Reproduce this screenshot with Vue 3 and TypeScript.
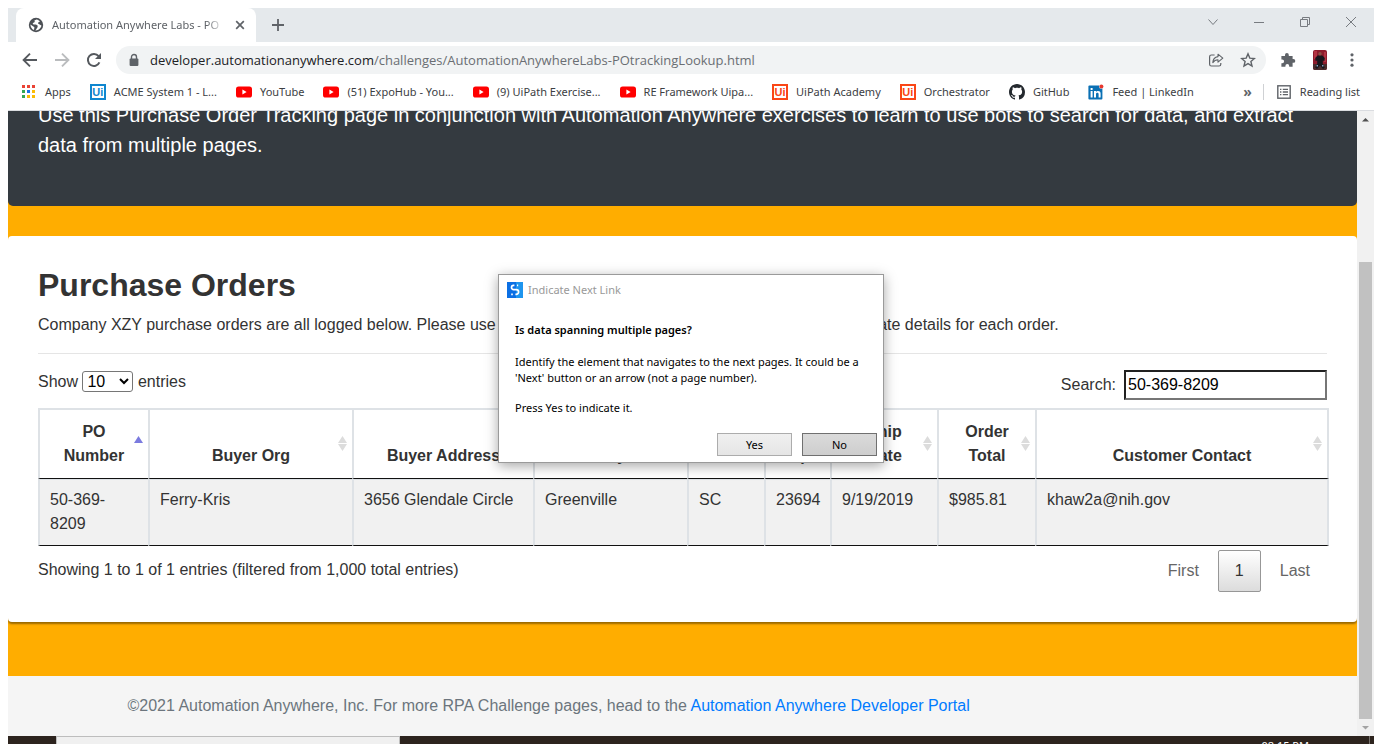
<script setup lang="ts">
import { ref } from 'vue'

type IconKind = 'apps' | 'ui-blue' | 'ui-red' | 'youtube' | 'github' | 'linkedin'

interface Bookmark {
  icon: IconKind
  label: string
}

interface Column {
  key: string
  label: string
}

const bookmarks: Bookmark[] = [
  { icon: 'apps', label: 'Apps' },
  { icon: 'ui-blue', label: 'ACME System 1 - L...' },
  { icon: 'youtube', label: 'YouTube' },
  { icon: 'youtube', label: '(51) ExpoHub - You...' },
  { icon: 'youtube', label: '(9) UiPath Exercise...' },
  { icon: 'youtube', label: 'RE Framework Uipa...' },
  { icon: 'ui-red', label: 'UiPath Academy' },
  { icon: 'ui-red', label: 'Orchestrator' },
  { icon: 'github', label: 'GitHub' },
  { icon: 'linkedin', label: 'Feed | LinkedIn' },
]

const appDots = ['#ea4335', '#ea4335', '#ea4335', '#34a853', '#1a73e8', '#fbbc04', '#34a853', '#fbbc04', '#fbbc04']

const columns: Column[] = [
  { key: 'po', label: 'PO Number' },
  { key: 'org', label: 'Buyer Org' },
  { key: 'address', label: 'Buyer Address' },
  { key: 'city', label: 'City' },
  { key: 'state', label: 'State' },
  { key: 'zip', label: 'Zip' },
  { key: 'ship', label: 'Ship Date' },
  { key: 'total', label: 'Order Total' },
  { key: 'contact', label: 'Customer Contact' },
]

const orders: Record<string, string>[] = [
  {
    po: '50-369-8209',
    org: 'Ferry-Kris',
    address: '3656 Glendale Circle',
    city: 'Greenville',
    state: 'SC',
    zip: '23694',
    ship: '9/19/2019',
    total: '$985.81',
    contact: 'khaw2a@nih.gov',
  },
]

const pageSize = ref('10')
const search = ref('50-369-8209')
</script>

<template>
  <div class="screen">
    <div class="browser">
      <header class="tabstrip">
        <div class="tab">
          <svg class="i16" viewBox="0 0 16 16">
            <circle cx="8" cy="8" r="7.2" fill="#4d5156" />
            <path d="M8.6 2.4 L6.4 3.4 L6.8 5 L4.6 6.2 L5.4 7.4 L8 7.6 L9.8 8.8 L9.4 10.4 L7.4 13.4 C10.6 13.6 13.2 11.2 13.4 8.6 L11.6 7.6 L10 6.6 L10.4 5.2 L12 4.4 C11 3.2 10 2.6 8.6 2.4 Z M2.4 7.4 L5 9.2 L6.4 10.2 L6 13 C3.8 12 2.4 9.8 2.4 7.4 Z" fill="#fff" />
          </svg>
          <span class="tab-title">Automation Anywhere Labs - PO</span>
          <button class="bare" aria-label="Close tab">
            <svg class="i16" viewBox="0 0 16 16"><path d="M4.2 4.2 L11.8 11.8 M11.8 4.2 L4.2 11.8" stroke="#5f6368" stroke-width="1.7" fill="none" /></svg>
          </button>
        </div>
        <button class="bare new-tab" aria-label="New tab">
          <svg class="i16" viewBox="0 0 16 16"><path d="M8 2 V14 M2 8 H14" stroke="#5f6368" stroke-width="1.8" fill="none" /></svg>
        </button>
        <div class="window-controls">
          <button class="bare" aria-label="Search tabs"><svg class="i16" viewBox="0 0 16 16"><path d="M3.5 5.5 L8 10.5 L12.5 5.5" stroke="#777b80" fill="none" /></svg></button>
          <button class="bare" aria-label="Minimize"><svg class="i16" viewBox="0 0 16 16"><path d="M3 8.5 H13" stroke="#777b80" fill="none" /></svg></button>
          <button class="bare" aria-label="Restore"><svg class="i16" viewBox="0 0 16 16"><path d="M3.5 5.5 H10.5 V12.5 H3.5 Z M5.5 5.5 V3.5 H12.5 V10.5 H10.5" stroke="#777b80" fill="none" /></svg></button>
          <button class="bare" aria-label="Close window"><svg class="i16" viewBox="0 0 16 16"><path d="M3 3 L13 13 M13 3 L3 13" stroke="#777b80" fill="none" /></svg></button>
        </div>
      </header>

      <div class="toolbar">
        <button class="bare" aria-label="Back"><svg class="i16" viewBox="0 0 16 16"><path d="M15 8 H2 M8 1.6 L1.6 8 L8 14.4" stroke="#55595e" stroke-width="1.9" fill="none" /></svg></button>
        <button class="bare" aria-label="Forward"><svg class="i16" viewBox="0 0 16 16"><path d="M1 8 H14 M8 1.6 L14.4 8 L8 14.4" stroke="#babcbe" stroke-width="1.9" fill="none" /></svg></button>
        <button class="bare" aria-label="Reload"><svg class="i16" viewBox="0 0 16 16"><path d="M13.4 10.4 A6 6 0 1 1 12.6 4.2" stroke="#55595e" stroke-width="2" fill="none" /><path d="M15 1 V7 H9 Z" fill="#55595e" /></svg></button>
        <div class="omnibox">
          <svg class="lock" viewBox="0 0 10 14"><path d="M2.5 6 V4 A2.5 2.5 0 0 1 7.5 4 V6" stroke="#5f6368" stroke-width="1.4" fill="none" /><rect x="0.6" y="5.4" width="8.8" height="7.6" rx="1" fill="#5f6368" /></svg>
          <span class="url"><b>developer.automationanywhere.com</b>/challenges/AutomationAnywhereLabs-POtrackingLookup.html</span>
          <button class="bare" aria-label="Share"><svg class="i16" viewBox="0 0 16 16"><path d="M6.6 3 H3.4 A1.8 1.8 0 0 0 1.6 4.8 V12.2 A1.8 1.8 0 0 0 3.4 14 H11 A1.8 1.8 0 0 0 12.8 12.2 V11" stroke="#5f6368" stroke-width="1.2" fill="none" /><path d="M10 2.2 L14.8 6.2 L10 10.2 V7.8 C7.6 7.8 6 8.8 4.8 10.6 C5 7.4 6.8 5 10 4.6 Z" stroke="#5f6368" stroke-width="1.1" stroke-linejoin="round" fill="none" /></svg></button>
          <button class="bare" aria-label="Bookmark this tab"><svg class="i16" viewBox="0 0 16 16"><path d="M8 1.8 L9.8 6.1 L14.4 6.5 L10.9 9.5 L12 14 L8 11.6 L4 14 L5.1 9.5 L1.6 6.5 L6.2 6.1 Z" stroke="#5f6368" stroke-width="1.4" fill="none" /></svg></button>
        </div>
        <button class="bare" aria-label="Extensions"><svg class="i16" viewBox="0 0 16 16"><path d="M1.4 4 H5 V3 A1.9 1.9 0 0 1 8.8 3 V4 H12.6 V7 H13.4 A1.9 1.9 0 0 1 13.4 10.8 H12.6 V14.8 H9.2 V14 A1.8 1.8 0 0 0 5.4 14 V14.8 H1.4 V11.2 H2.2 A1.9 1.9 0 0 0 2.2 7.4 H1.4 Z" fill="#5f6368" /></svg></button>
        <svg class="avatar" viewBox="0 0 14 20">
          <rect width="14" height="20" rx="2" fill="#8d1c2c" />
          <path d="M1 1 H4 V9 H1 Z M11 2 H13 V12 H11 Z" fill="#b23443" />
          <path d="M0 14 H14 V18 A2 2 0 0 1 12 20 H2 A2 2 0 0 1 0 18 Z" fill="#4a2c2c" />
          <path d="M4.6 5.6 H9.4 L11.8 8 L11.4 11 L9.8 10.6 V14 L11.8 17.6 L10 19 L7 15.6 L4 19 L2.2 17.6 L4.2 14 V10.6 L2.6 11 L2.2 8 Z" fill="#17161c" />
          <circle cx="7" cy="3.8" r="1.7" fill="#8a5348" />
          <path d="M3.6 15 H5 V16.6 H3.6 Z M9 15 H10.4 V16.6 H9 Z" fill="#8aa4c6" />
        </svg>
        <button class="bare" aria-label="Menu"><svg class="i16" viewBox="0 0 16 16"><circle cx="8" cy="2.8" r="1.6" fill="#5f6368" /><circle cx="8" cy="8" r="1.6" fill="#5f6368" /><circle cx="8" cy="13.2" r="1.6" fill="#5f6368" /></svg></button>
      </div>

      <nav class="bookmarks">
        <a v-for="(item, i) in bookmarks" :key="i" href="#" class="bookmark">
          <svg v-if="item.icon === 'apps'" class="i16" viewBox="0 0 16 16">
            <rect v-for="(dot, d) in appDots" :key="d" :x="(d % 3) * 5 + 1" :y="Math.floor(d / 3) * 5 + 1" width="3" height="3" :fill="dot" />
          </svg>
          <span v-else-if="item.icon === 'ui-blue'" class="ui-logo blue">Ui</span>
          <span v-else-if="item.icon === 'ui-red'" class="ui-logo red">Ui</span>
          <svg v-else-if="item.icon === 'youtube'" class="i16" viewBox="0 0 16 16">
            <rect y="2.4" width="16" height="11.2" rx="2.6" fill="#f00" /><path d="M6.4 5.6 L10.6 8 L6.4 10.4 Z" fill="#fff" />
          </svg>
          <svg v-else-if="item.icon === 'github'" class="i16" viewBox="0 0 16 16">
            <path fill="#24292e" d="M8 0C3.58 0 0 3.58 0 8c0 3.54 2.29 6.53 5.47 7.59.4.07.55-.17.55-.38 0-.19-.01-.82-.01-1.49-2.01.37-2.53-.49-2.69-.94-.09-.23-.48-.94-.82-1.13-.28-.15-.68-.52-.01-.53.63-.01 1.08.58 1.23.82.72 1.21 1.87.87 2.33.66.07-.52.28-.87.51-1.07-1.78-.2-3.64-.89-3.64-3.95 0-.87.31-1.59.82-2.15-.08-.2-.36-1.02.08-2.12 0 0 .67-.21 2.2.82.64-.18 1.32-.27 2-.27s1.36.09 2 .27c1.53-1.04 2.2-.82 2.2-.82.44 1.1.16 1.92.08 2.12.51.56.82 1.27.82 2.15 0 3.07-1.87 3.75-3.65 3.95.29.25.54.73.54 1.48 0 1.07-.01 1.93-.01 2.2 0 .21.15.46.55.38A8.01 8.01 0 0 0 16 8c0-4.42-3.58-8-8-8Z" />
          </svg>
          <svg v-else class="i16" viewBox="0 0 16 16">
            <rect x="0.4" y="1.6" width="14" height="14" rx="1" fill="#0a70b4" />
            <path d="M2.6 7 H4.6 V13.4 H2.6 Z M2.6 4 H4.6 V6 H2.6 Z M6 7 H8 V8 C9 6.4 12.6 6.4 12.6 9.4 V13.4 H10.6 V10 C10.6 8.2 8 8.2 8 10 V13.4 H6 Z" fill="#fff" />
            <circle cx="13.4" cy="2.4" r="2.4" fill="#fff" /><circle cx="13.4" cy="2.4" r="2" fill="#e8382e" />
          </svg>
          <span>{{ item.label }}</span>
        </a>
        <span class="more">»</span>
        <a href="#" class="bookmark reading">
          <svg class="i16" viewBox="0 0 16 16"><rect x="1.8" y="1.8" width="12.4" height="12.4" stroke="#5f6368" stroke-width="1.4" fill="none" /><path d="M4 5.4 H5.4 M4 8 H5.4 M4 10.6 H5.4 M6.8 5.4 H12 M6.8 8 H12 M6.8 10.6 H12" stroke="#5f6368" stroke-width="1.3" /></svg>
          <span>Reading list</span>
        </a>
      </nav>

      <div class="viewport">
        <main class="page">
          <section class="jumbotron">
            <p>Use this Purchase Order Tracking page in conjunction with Automation Anywhere exercises to learn to use bots to search for data, and extract data from multiple pages.</p>
          </section>

          <section class="card">
            <h2>Purchase Orders</h2>
            <p class="intro">Company XZY purchase orders are all logged below. Please use the search field to filter by PO number and quickly locate details for each order.</p>
            <hr />
            <div class="controls">
              <label class="length">Show
                <select v-model="pageSize"><option>10</option><option>25</option><option>50</option></select>
                entries</label>
              <label class="filter">Search: <input v-model="search" type="search" /></label>
            </div>
            <table>
              <colgroup><col v-for="c in columns" :key="c.key" :class="'col-' + c.key" /></colgroup>
              <thead>
                <tr>
                  <th v-for="(c, i) in columns" :key="c.key" scope="col" :aria-sort="i === 0 ? 'ascending' : 'none'">
                    {{ c.label }}
                    <svg class="sort" viewBox="0 0 9 15">
                      <path d="M4.5 0 L9 7 H0 Z" :fill="i === 0 ? '#7b7bdf' : '#dcdcdc'" />
                      <path v-if="i > 0" d="M0 8 H9 L4.5 15 Z" fill="#dcdcdc" />
                    </svg>
                  </th>
                </tr>
              </thead>
              <tbody>
                <tr v-for="o in orders" :key="o.po">
                  <td v-for="c in columns" :key="c.key">{{ o[c.key] }}</td>
                </tr>
              </tbody>
            </table>
            <div class="table-foot">
              <span class="info">Showing 1 to 1 of 1 entries (filtered from 1,000 total entries)</span>
              <div class="pager">
                <button class="page-btn">First</button>
                <button class="page-btn current">1</button>
                <button class="page-btn">Last</button>
              </div>
            </div>
          </section>

          <footer class="footer">
            <p>©2021 Automation Anywhere, Inc. For more RPA Challenge pages, head to the <a href="#">Automation Anywhere Developer Portal</a></p>
          </footer>
        </main>
        <div class="scrollbar">
          <svg class="arrow" viewBox="0 0 17 17"><path d="M5 10.5 L8.5 7 L12 10.5 Z" fill="#505050" /></svg>
          <div class="track"><div class="thumb"></div></div>
          <svg class="arrow" viewBox="0 0 17 17"><path d="M5 7 L8.5 10.5 L12 7 Z" fill="#a3a3a3" /></svg>
        </div>
      </div>
      <div class="taskbar">
        <div class="task-search"></div>
        <span class="clock">08:15 PM</span>
      </div>
    </div>

    <div class="dialog" role="dialog" aria-labelledby="dialog-title">
      <div class="dialog-title">
        <svg class="i16" viewBox="0 0 16 16">
          <rect width="16" height="16" fill="#0b6fe4" /><path d="M9 0 H16 V16 H9 Z" fill="#1e95ee" />
          <path d="M7.4 3.4 H6.6 A2.1 2.1 0 0 0 6.6 7.6 H9.2 A2.4 2.4 0 0 1 9.2 12.4 H8.4 M10 3.4 H11.2 M4.2 12.4 H5.8" stroke="#fff" stroke-width="1.7" fill="none" />
        </svg>
        <span id="dialog-title">Indicate Next Link</span>
      </div>
      <strong>Is data spanning multiple pages?</strong>
      <p>Identify the element that navigates to the next pages. It could be a<br />'Next' button or an arrow (not a page number).</p>
      <p>Press Yes to indicate it.</p>
      <div class="dialog-actions">
        <button>Yes</button>
        <button class="default">No</button>
      </div>
    </div>
  </div>
</template>

<style>
body {
  background: #fff;
}
</style>

<style scoped>
* {
  box-sizing: border-box;
}
.screen {
  position: relative;
  height: 100vh;
  padding: 8px 8px 0;
  overflow: hidden;
  font-family: "Liberation Sans", Arial, sans-serif;
  font-size: 16px;
  line-height: 24px;
  color: #333;
}
.browser {
  display: flex;
  flex-direction: column;
  height: 100%;
}
.i16 {
  display: block;
  flex: none;
  width: 16px;
  height: 16px;
}
.bare {
  flex: none;
  padding: 0;
  border: 0;
  background: none;
}
.tabstrip {
  display: flex;
  flex: none;
  align-items: center;
  height: 34px;
  padding-left: 8px;
  background: #e5e9ec;
}
.tab {
  display: flex;
  align-items: center;
  gap: 8px;
  width: 240px;
  height: 34px;
  padding: 0 8px 0 12px;
  border-radius: 8px 8px 0 0;
  background: #fff;
  font: 11px/16px "Noto Sans", sans-serif;
  color: #5f6368;
}
.tab-title {
  flex: 1;
  overflow: hidden;
  white-space: nowrap;
  mask-image: linear-gradient(90deg, #000 90%, transparent);
}
.new-tab {
  margin-left: 14px;
}
.window-controls {
  display: flex;
  gap: 30px;
  margin: 0 15px 6px auto;
}
.toolbar {
  display: flex;
  flex: none;
  align-items: center;
  gap: 16px;
  height: 36px;
  padding: 0 14px;
}
.omnibox {
  display: flex;
  flex: 1;
  align-items: center;
  gap: 16px;
  height: 28px;
  margin: 0 -2px 0 -2px;
  padding: 0 10px 0 13px;
  border-radius: 14px;
  background: #f1f3f4;
}
.lock {
  flex: none;
  width: 10px;
  height: 14px;
}
.url {
  flex: 1;
  margin-left: -5px;
  font: 13px/20px "Open Sans", sans-serif;
  color: #6a6e73;
  white-space: nowrap;
}
.url b {
  font-weight: 400;
  color: #202124;
}
.avatar {
  flex: none;
  width: 14px;
  height: 20px;
  margin: 0 1px;
}
.bookmarks {
  display: flex;
  flex: none;
  align-items: center;
  gap: 19px;
  height: 33px;
  padding: 2px 14px 6px 13px;
  border-bottom: 1px solid #dadce0;
}
.bookmark {
  display: flex;
  align-items: center;
  gap: 8px;
  font: 11px/16px "Noto Sans", sans-serif;
  color: #3c4043;
  text-decoration: none;
  white-space: nowrap;
}
.ui-logo {
  width: 16px;
  height: 16px;
  border: 2px solid;
  font: bold 11px/12px "Liberation Sans", sans-serif;
  text-align: center;
}
.blue {
  color: #0f86cf;
}
.red {
  color: #fa4616;
}
.more {
  margin: 0 -8px 0 auto;
  font: bold 14px/16px "Open Sans", sans-serif;
  color: #5f6368;
}
.reading {
  padding-left: 12px;
  border-left: 1px solid #cfd1d4;
}
.viewport {
  display: flex;
  flex: 1;
  min-height: 0;
}
/* The page is scrolled to its end, so it hangs from the bottom edge. */
.page {
  display: flex;
  flex: 1;
  flex-direction: column;
  justify-content: flex-end;
  min-width: 0;
  overflow: hidden;
  background: #ffad00;
}
.page > * {
  flex: none;
}
.jumbotron {
  margin-bottom: 30px;
  padding: 0 30px 46px;
  border-radius: 0 0 5px 5px;
  background: #343a40;
  font-size: 20px;
  line-height: 30px;
  color: #fff;
}
p {
  margin: 0;
}
.card {
  margin-bottom: 54px;
  padding: 30px;
  border-radius: 4px;
  background: #fff;
  box-shadow: 0 2px 2px rgba(0, 0, 0, 0.4);
}
h2 {
  margin: 0 0 9px;
  font-size: 32px;
  line-height: 38px;
}
hr {
  margin: 16px 0;
  border: 0;
  border-top: 1px solid #e5e5e5;
}
.intro {
  white-space: nowrap;
}
.controls {
  display: flex;
  justify-content: space-between;
  margin-bottom: 8px;
}
.length select {
  width: 51px;
  height: 21px;
  padding: 0;
  border: 1px solid #767676;
  border-radius: 3px;
  background: #fff;
  font: 16px "Liberation Sans", sans-serif;
}
.filter {
  display: flex;
  align-items: center;
  gap: 8px;
}
.filter input {
  width: 203px;
  height: 30px;
  padding: 1px 2px;
  border: 2px inset #767676;
  background: #fff;
  font: 16px "Liberation Sans", sans-serif;
  color: #000;
  appearance: none;
}
table {
  width: calc(100% + 2px);
  border-spacing: 0;
  table-layout: fixed;
}
.col-po { width: 110px; }
.col-org { width: 204px; }
.col-address { width: 181px; }
.col-city { width: 154px; }
.col-state { width: 77px; }
.col-zip { width: 66px; }
.col-ship { width: 107px; }
.col-total { width: 98px; }
th {
  position: relative;
  padding: 10px 18px;
  border: solid #dee2e6;
  border-width: 2px 0 0 2px;
  border-bottom: 1px solid #111;
  vertical-align: bottom;
}
.sort {
  position: absolute;
  top: 26px;
  right: 5px;
  width: 9px;
  height: 15px;
}
td {
  padding: 8px 9px 9px 10px;
  border: solid #dee2e6;
  border-width: 1px 0 0 2px;
  border-bottom: 1px solid #111;
  background: #f1f1f1;
  vertical-align: top;
}
th:last-child,
td:last-child {
  border-right: 2px solid #dee2e6;
}
.table-foot {
  display: flex;
  justify-content: space-between;
  padding-top: 4px;
}
.info {
  padding-top: 8px;
}
.pager {
  display: flex;
  gap: 2px;
}
.page-btn {
  height: 42px;
  padding: 0 16px;
  border: 1px solid transparent;
  border-radius: 2px;
  background: none;
  font: 16px/24px "Liberation Sans", sans-serif;
  color: #666;
}
.current {
  border-color: #979797;
  background: linear-gradient(#fff, #dcdcdc);
  color: #333;
}
.footer {
  height: 60px;
  background: #f5f5f5;
  color: #6c757d;
}
.footer p {
  max-width: 1140px;
  margin: 0 auto;
  padding: 18px 15px;
}
.footer a {
  color: #007bff;
  text-decoration: none;
}
.scrollbar {
  display: flex;
  flex: none;
  flex-direction: column;
  width: 17px;
  background: #f1f1f1;
}
.arrow {
  flex: none;
  width: 17px;
  height: 17px;
}
.track {
  flex: 1;
  display: flex;
  padding: 134px 2px 0;
}
.thumb {
  flex: 1;
  background: #c1c1c1;
}
.taskbar {
  display: flex;
  flex: none;
  justify-content: space-between;
  height: 8px;
  padding: 0 4px 0 48px;
  overflow: hidden;
  background: #2d241e;
}
.task-search {
  width: 344px;
  border: 1px solid #bdbdbd;
  border-bottom: 0;
  background: #f0f0f0;
}
.clock {
  padding: 2px 60px 0 0;
  border-right: 1px solid #77716c;
  font: 11px/16px "Noto Sans", sans-serif;
  color: #fff;
}
.dialog {
  position: absolute;
  top: 274px;
  left: 50%;
  width: 386px;
  padding: 7px 6px 6px 16px;
  border: 1px solid #9a9a9a;
  background: #fff;
  box-shadow: 0 3px 12px rgba(0, 0, 0, 0.35);
  font: 11px/16px "Noto Sans", sans-serif;
  color: #000;
  transform: translateX(-50%);
}
.dialog-title {
  display: flex;
  gap: 5px;
  margin: 0 0 24px -8px;
  color: #999;
}
.dialog strong {
  display: block;
  margin-bottom: 16px;
  font-weight: 600;
}
.dialog p {
  margin-bottom: 14px;
  white-space: nowrap;
}
.dialog-actions {
  display: flex;
  justify-content: flex-end;
  gap: 10px;
  padding-top: 3px;
}
.dialog-actions button {
  width: 75px;
  height: 23px;
  padding: 0;
  border: 1px solid #acacac;
  background: linear-gradient(#f0f0f0, #e5e5e5);
  font: 11px/16px "Noto Sans", sans-serif;
  color: #000;
}
.dialog-actions .default {
  border-color: #707070;
  background: linear-gradient(#dadada, #cecece);
}
</style>
